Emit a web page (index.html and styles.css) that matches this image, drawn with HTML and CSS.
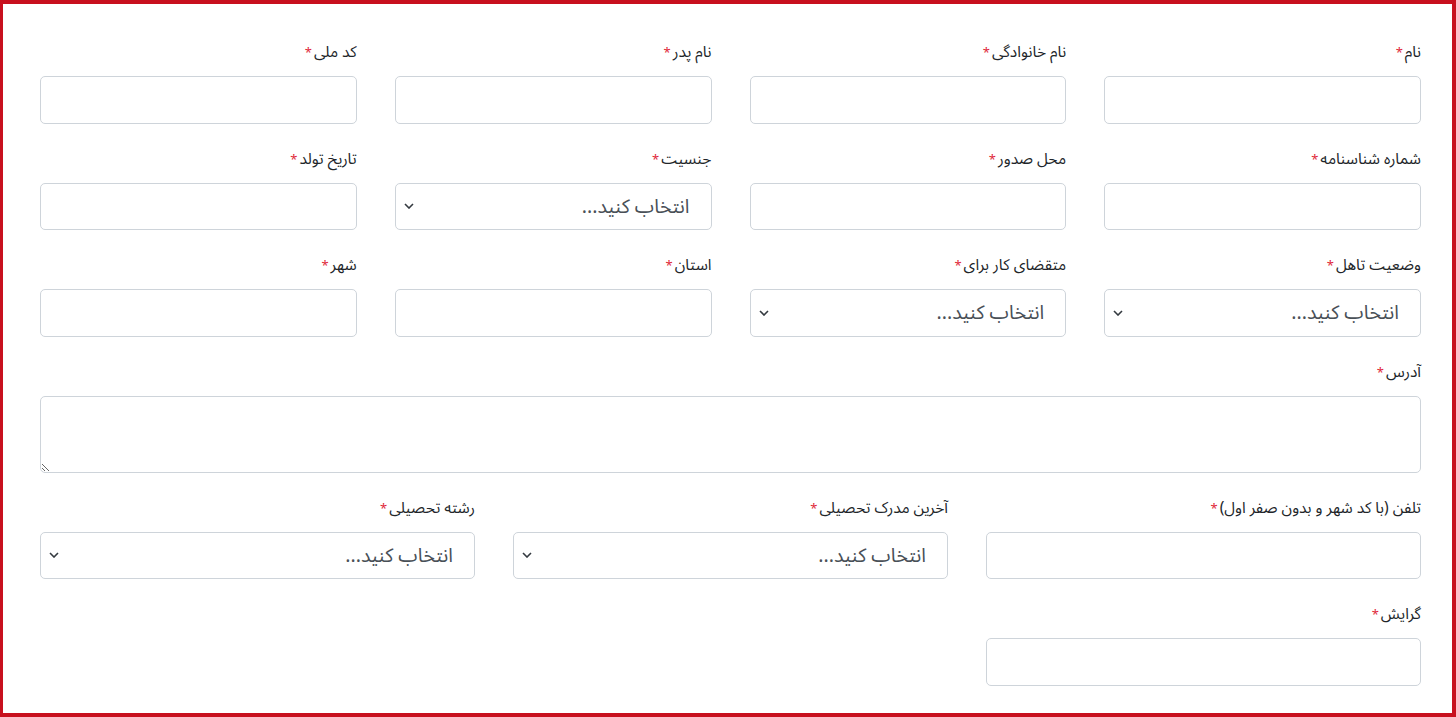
FILE: index.html
```html
<!DOCTYPE html>
<html lang="fa" dir="rtl">
<head>
<meta charset="utf-8">
<title>فرم</title>
<link rel="stylesheet" href="styles.css">
</head>
<body>
<main class="frame">
  <form class="form">
    <div class="grid grid-4">
      <div class="field"><label class="label">نام<span class="req">*</span></label><input class="control" type="text"></div>
      <div class="field"><label class="label">نام خانوادگی<span class="req">*</span></label><input class="control" type="text"></div>
      <div class="field"><label class="label">نام پدر<span class="req">*</span></label><input class="control" type="text"></div>
      <div class="field"><label class="label">کد ملی<span class="req">*</span></label><input class="control" type="text"></div>

      <div class="field"><label class="label">شماره شناسنامه<span class="req">*</span></label><input class="control" type="text"></div>
      <div class="field"><label class="label">محل صدور<span class="req">*</span></label><input class="control" type="text"></div>
      <div class="field"><label class="label">جنسیت<span class="req">*</span></label><select class="control select"><option>انتخاب کنید...</option></select></div>
      <div class="field"><label class="label">تاریخ تولد<span class="req">*</span></label><input class="control" type="text"></div>

      <div class="field"><label class="label">وضعیت تاهل<span class="req">*</span></label><select class="control select"><option>انتخاب کنید...</option></select></div>
      <div class="field"><label class="label">متقضای کار برای<span class="req">*</span></label><select class="control select"><option>انتخاب کنید...</option></select></div>
      <div class="field"><label class="label">استان<span class="req">*</span></label><input class="control" type="text"></div>
      <div class="field"><label class="label">شهر<span class="req">*</span></label><input class="control" type="text"></div>
    </div>

    <div class="field"><label class="label">آدرس<span class="req">*</span></label><textarea class="control area"></textarea></div>

    <div class="grid grid-3">
      <div class="field"><label class="label">تلفن (با کد شهر و بدون صفر اول)<span class="req">*</span></label><input class="control" type="text"></div>
      <div class="field"><label class="label">آخرین مدرک تحصیلی<span class="req">*</span></label><select class="control select"><option>انتخاب کنید...</option></select></div>
      <div class="field"><label class="label">رشته تحصیلی<span class="req">*</span></label><select class="control select"><option>انتخاب کنید...</option></select></div>
      <div class="field"><label class="label">گرایش<span class="req">*</span></label><input class="control" type="text"></div>
    </div>
  </form>
</main>
</body>
</html>
```

FILE: styles.css
```css
* { box-sizing: border-box; }
html, body { margin: 0; padding: 0; background: #fff; }
body {
  font-family: "Noto Sans Arabic", "Noto Naskh Arabic", "DejaVu Sans", sans-serif;
  color: #212529;
}
.frame {
  height: 100vh;
  overflow: hidden;
  border: 4px solid #c8101e;
  border-left-width: 3px;
  padding: 36px 31px 0 37px;
}
.form {
  display: flex;
  flex-direction: column;
  gap: 23px;
}
.grid {
  display: grid;
  column-gap: 38px;
  row-gap: 23px;
}
.grid-4 { grid-template-columns: repeat(4, 1fr); }
.grid-3 { grid-template-columns: repeat(3, 1fr); }
.field {
  display: flex;
  flex-direction: column;
}
.label {
  display: block;
  height: 24px;
  line-height: 24px;
  font-size: 15.5px;
  font-weight: 400;
  margin-bottom: 12px;
  color: #212529;
  white-space: nowrap;
}
.req {
  color: #e0283a;
  margin-right: 2px;
  font-size: 13px;
}
.control {
  display: block;
  width: 100%;
  height: 47.5px;
  border: 1px solid #ced4da;
  border-radius: 5px;
  background: #fff;
  font-family: inherit;
  font-size: 19.5px;
  color: #495057;
  padding: 0 21px 0 12px;
  direction: rtl;
  outline: none;
}
.select {
  -webkit-appearance: none;
  appearance: none;
  background-image: url("data:image/svg+xml;utf8,<svg xmlns='http://www.w3.org/2000/svg' width='10' height='6' viewBox='0 0 10 6'><path d='M1 1l4 4 4-4' fill='none' stroke='%23343a40' stroke-width='1.6'/></svg>");
  background-repeat: no-repeat;
  background-position: left 8px center;
  background-size: 10px 6px;
}
.area {
  height: 77px;
  resize: vertical;
  padding: 8px 12px;
}
```
